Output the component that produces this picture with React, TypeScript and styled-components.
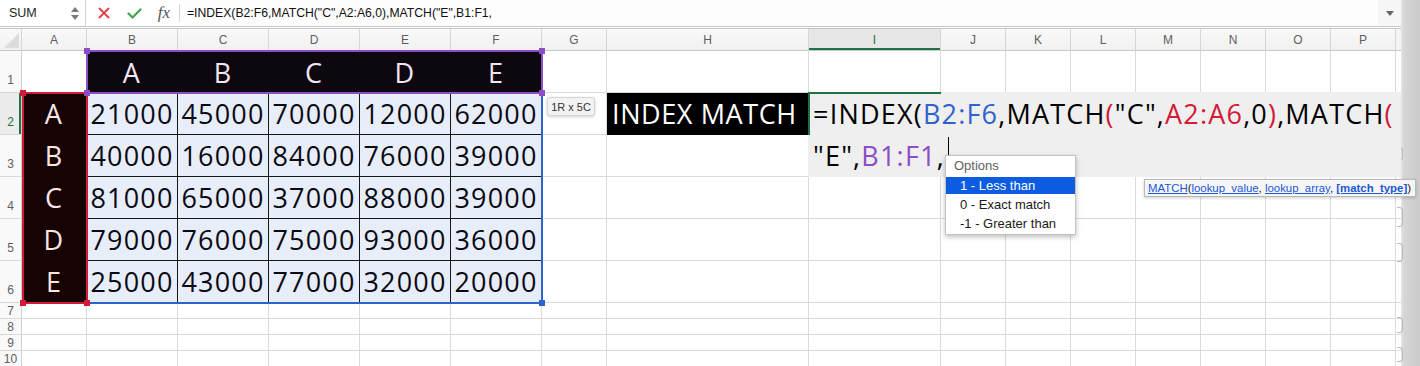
import React from 'react';
import styled, { createGlobalStyle, css } from 'styled-components';

const GlobalStyle = createGlobalStyle`
  *, *::before, *::after { box-sizing: border-box; }
  html, body { margin: 0; padding: 0; background: #ffffff; }
  body { font-family: "Liberation Sans", Arial, sans-serif; overflow: hidden; }
`;

const BIG_FONT = `"Open Sans", "Noto Sans", sans-serif`;

const Window = styled.div`
  position: relative;
  width: 1420px;
  height: 366px;
  overflow: hidden;
  display: grid;
  grid-template-columns: 1401px 19px;
`;

const Main = styled.div`
  display: flex;
  flex-direction: column;
  min-width: 0;
`;

const SideStrip = styled.div`
  position: relative;
  background: linear-gradient(to right, #e6e6e6 0px, #d6d6d6 3px, #cbcbcb 100%);
`;

const StripNotch = styled.span<{ $y: number; $h: number }>`
  position: absolute;
  left: -4px;
  top: ${(p) => p.$y}px;
  width: 6px;
  height: ${(p) => p.$h}px;
  border: 1px solid #b9b9b9;
  border-left: none;
  border-radius: 0 4px 4px 0;
`;

/* ---------- formula bar ---------- */
const FormulaBar = styled.div`
  height: 27px;
  flex: none;
  display: flex;
  align-items: stretch;
  border-bottom: 1px solid #c6c6c6;
  background: #ffffff;
`;

const NameBox = styled.div`
  width: 86px;
  border-right: 1px solid #d3d3d3;
  display: flex;
  align-items: center;
  justify-content: space-between;
  padding: 0 6px 0 9px;
  font-size: 12.5px;
  color: #1e1e1e;
`;

const Spinner = styled.svg`
  width: 8px;
  height: 18px;
`;

const ActionGroup = styled.div`
  display: flex;
  margin-left: 3px;
`;

const ActionSlot = styled.div`
  width: 30px;
  display: flex;
  align-items: center;
  justify-content: center;
`;

const FxLabel = styled.span`
  font-family: "Liberation Serif", "Times New Roman", serif;
  font-style: italic;
  font-size: 17px;
  color: #555555;
  margin-top: -1px;
`;

const BarSeparator = styled.div`
  width: 1px;
  background: #d6d6d6;
  margin: 4px 0;
`;

const FormulaText = styled.div`
  flex: 1;
  display: flex;
  align-items: center;
  padding-left: 7px;
  font-size: 12.2px;
  color: #111111;
  white-space: nowrap;
  background: #fdfdfd;
`;

const ExpandSlot = styled.div`
  width: 23px;
  display: flex;
  align-items: center;
  justify-content: center;
  background: #f6f6f6;
`;

const BarRule = styled.div`
  height: 2px;
  flex: none;
  border-bottom: 1px solid #c6c6c6;
`;

/* ---------- sheet grid ---------- */
const Sheet = styled.div`
  display: grid;
  grid-template-columns: 22px 65px 91px 91px 91px 91px 91px 65px 202px 132px repeat(7, 65px) 5px;
  grid-template-rows: 22px repeat(6, 42px) repeat(4, 16px);
`;

const headerBase = css`
  background: linear-gradient(#f9f9f9, #f1f1f1);
  border-right: 1px solid #d6d6d6;
  border-bottom: 1px solid #c8c8c8;
  font-family: "Liberation Sans", Arial, sans-serif;
  font-size: 12px;
  color: #5e5e5e;
`;

const Corner = styled.div`
  ${headerBase};
  display: flex;
  align-items: flex-end;
  justify-content: flex-end;
`;

const CornerMark = styled.svg`
  width: 21px;
  height: 21px;
`;

const ColHeader = styled.div<{ $active?: boolean; $edge?: boolean }>`
  ${headerBase};
  display: flex;
  align-items: center;
  justify-content: center;
  ${(p) =>
    p.$active &&
    css`
      background: #e7e7e7;
      color: #1f7145;
      box-shadow: inset 0 -2px 0 #1f7145;
    `}
  ${(p) =>
    p.$edge &&
    css`
      border-right: none;
      background: #f4f4f4;
    `}
`;

const RowHeader = styled.div<{ $active?: boolean; $compact?: boolean }>`
  background: #f9f9f9;
  border-right: 1px solid #d0d0d0;
  border-bottom: 1px solid #d9d9d9;
  display: flex;
  align-items: ${(p) => (p.$compact ? 'center' : 'flex-end')};
  justify-content: center;
  font-size: 12px;
  line-height: 14px;
  color: #5e5e5e;
  padding-bottom: ${(p) => (p.$compact ? 0 : 5)}px;
  ${(p) =>
    p.$active &&
    css`
      background: #ececec;
      color: #1f7145;
      box-shadow: inset -2px 0 0 #1f7145;
    `}
`;

type Kind = 'plain' | 'title' | 'label' | 'data' | 'banner' | 'edge';

const kindStyles: Record<Kind, ReturnType<typeof css>> = {
  plain: css``,
  edge: css`
    border-right: none;
  `,
  title: css`
    background: #0d0710;
    color: #f4e6f0;
    border-color: #0d0710;
    padding-top: 2px;
  `,
  label: css`
    background: #160404;
    color: #fde4e5;
    border-color: #160404;
  `,
  data: css`
    background: #e7edf9;
    color: #0a0a12;
    border-color: #161616;
  `,
  banner: css`
    background: #000000;
    color: #ffffff;
    border-color: #000000;
    justify-content: flex-start;
    padding-left: 5px;
    letter-spacing: 0.6px;
  `,
};

const Cell = styled.div<{ $kind: Kind }>`
  border-right: 1px solid #dadada;
  border-bottom: 1px solid #dadada;
  display: flex;
  align-items: center;
  justify-content: center;
  font-family: ${BIG_FONT};
  font-size: 27px;
  font-weight: 500;
  line-height: 1;
  letter-spacing: 1.2px;
  white-space: nowrap;
  overflow: hidden;
  ${(p) => kindStyles[p.$kind]}
`;

/* ---------- overlays ---------- */
const Frame = styled.div<{ $c: string; $x: number; $y: number; $w: number; $h: number }>`
  position: absolute;
  left: ${(p) => p.$x}px;
  top: ${(p) => p.$y}px;
  width: ${(p) => p.$w}px;
  height: ${(p) => p.$h}px;
  border: 2px solid ${(p) => p.$c};
  pointer-events: none;
`;

type Corner4 = 'tl' | 'tr' | 'bl' | 'br';

const Handle = styled.span<{ $c: string; $at: Corner4 }>`
  position: absolute;
  width: 6px;
  height: 6px;
  background: ${(p) => p.$c};
  ${(p) => (p.$at[0] === 't' ? 'top: -4px;' : 'bottom: -4px;')}
  ${(p) => (p.$at[1] === 'l' ? 'left: -4px;' : 'right: -4px;')}
`;

const CellEditor = styled.div`
  position: absolute;
  left: 808px;
  top: 92px;
  width: 593px;
  height: 85px;
  background: #efefef;
  padding: 1px 0 0 5px;
  font-family: ${BIG_FONT};
  font-size: 27px;
  font-weight: 500;
  letter-spacing: 1.2px;
  line-height: 42px;
  color: #000000;
  white-space: nowrap;
  overflow: hidden;
  &::before {
    content: '';
    position: absolute;
    left: 0;
    top: 0;
    width: 133px;
    height: 2px;
    background: #1e7145;
  }
  &::after {
    content: '';
    position: absolute;
    left: 0;
    top: 0;
    width: 2px;
    height: 43px;
    background: #1e7145;
  }
`;

const EditorLine = styled.div`
  height: 42px;
`;

const Token = styled.span<{ $c?: string }>`
  color: ${(p) => p.$c || '#000000'};
`;

const Caret = styled.span`
  display: inline-block;
  width: 1px;
  height: 20px;
  background: #000000;
  margin-left: 3px;
  vertical-align: 9px;
`;

const SizeBadge = styled.div`
  position: absolute;
  left: 547px;
  top: 97px;
  width: 48px;
  height: 19px;
  background: #f3f3f3;
  border: 1px solid #d4d4d4;
  border-radius: 3px;
  box-shadow: 0 1px 3px rgba(0, 0, 0, 0.18);
  font-size: 11px;
  color: #333333;
  display: flex;
  align-items: center;
  justify-content: center;
`;

const OptionsMenu = styled.div`
  position: absolute;
  left: 945px;
  top: 155px;
  width: 131px;
  background: #ffffff;
  border: 1px solid #c3c3c3;
  box-shadow: 0 2px 5px rgba(0, 0, 0, 0.25);
  font-family: "Liberation Sans", Arial, sans-serif;
  font-size: 13px;
  color: #1a1a1a;
  padding-bottom: 1px;
`;

const MenuHeading = styled.div`
  height: 20px;
  line-height: 20px;
  padding-left: 8px;
  color: #5e5e5e;
`;

const MenuItem = styled.div<{ $selected?: boolean }>`
  height: 19px;
  line-height: 19px;
  padding-left: 14px;
  white-space: nowrap;
  ${(p) =>
    p.$selected &&
    css`
      color: #ffffff;
      background: linear-gradient(#0b5ce0, #0b5ce0) center / 100% 17px no-repeat;
    `}
`;

const ArgTip = styled.div`
  position: absolute;
  left: 1144px;
  top: 179px;
  height: 18px;
  padding: 0 4px 0 3px;
  background: #f6f6f6;
  border: 1px solid #b9b9b9;
  box-shadow: 0 1px 3px rgba(0, 0, 0, 0.2);
  font-size: 11.4px;
  line-height: 16px;
  color: #222222;
  white-space: nowrap;
`;

const ArgLink = styled.span<{ $strong?: boolean }>`
  color: #1a56d6;
  text-decoration: underline;
  font-weight: ${(p) => (p.$strong ? 700 : 400)};
`;

/* ---------- data ---------- */
const COL_LABELS = 'ABCDEFGHIJKLMNOP'.split('');
const LETTERS = ['A', 'B', 'C', 'D', 'E'];
const DATA = [
  ['21000', '45000', '70000', '12000', '62000'],
  ['40000', '16000', '84000', '76000', '39000'],
  ['81000', '65000', '37000', '88000', '39000'],
  ['79000', '76000', '75000', '93000', '36000'],
  ['25000', '43000', '77000', '32000', '20000'],
];

function cellAt(r: number, c: number): { kind: Kind; text?: string } {
  if (r === 1 && c >= 1 && c <= 5) return { kind: 'title', text: LETTERS[c - 1] };
  if (r >= 2 && r <= 6 && c === 0) return { kind: 'label', text: LETTERS[r - 2] };
  if (r >= 2 && r <= 6 && c >= 1 && c <= 5) return { kind: 'data', text: DATA[r - 2][c - 1] };
  if (r === 2 && c === 7) return { kind: 'banner', text: 'INDEX MATCH' };
  return { kind: 'plain' };
}

const BLUE = '#2f63cc';
const RED = '#d21c37';
const PURPLE = '#8c4ec6';

const NOTCHES = [
  { y: 147, h: 14 },
  { y: 207, h: 20 },
  { y: 243, h: 19 },
  { y: 317, h: 16 },
  { y: 347, h: 15 },
];

function Handles({ c, at }: { c: string; at: Corner4[] }) {
  return (
    <>
      {at.map((a) => (
        <Handle key={a} $c={c} $at={a} />
      ))}
    </>
  );
}

export default function App() {
  const cells: React.ReactNode[] = [];
  cells.push(
    <Corner key="corner">
      <CornerMark viewBox="0 0 21 21">
        <polygon points="19,4 19,19 4,19" fill="#dcdcdc" />
      </CornerMark>
    </Corner>
  );
  COL_LABELS.forEach((l) =>
    cells.push(
      <ColHeader key={'h' + l} $active={l === 'I'}>
        {l}
      </ColHeader>
    )
  );
  cells.push(<ColHeader key="h-end" $edge />);
  for (let r = 1; r <= 10; r++) {
    cells.push(
      <RowHeader key={'r' + r} $active={r === 2} $compact={r > 6}>
        {r}
      </RowHeader>
    );
    for (let c = 0; c < 16; c++) {
      const { kind, text } = cellAt(r, c);
      cells.push(
        <Cell key={`${r}-${c}`} $kind={kind}>
          {text}
        </Cell>
      );
    }
    cells.push(<Cell key={`${r}-end`} $kind="edge" />);
  }

  return (
    <>
      <GlobalStyle />
      <Window>
        <Main>
          <FormulaBar>
            <NameBox>
              <span>SUM</span>
              <Spinner viewBox="0 0 8 18">
                <polygon points="0,8 4,3 8,8" fill="#7a7a7a" />
                <polygon points="0,11 8,11 4,16" fill="#7a7a7a" />
              </Spinner>
            </NameBox>
            <ActionGroup>
              <ActionSlot>
                <svg width="12" height="12" viewBox="0 0 12 12">
                  <path d="M1.5 1.5 L10.5 10.5 M10.5 1.5 L1.5 10.5" stroke="#e4434a" strokeWidth="2" strokeLinecap="round" />
                </svg>
              </ActionSlot>
              <ActionSlot>
                <svg width="15" height="11" viewBox="0 0 15 11">
                  <path d="M1.5 5.5 L5.5 9.5 L13.5 1.5" stroke="#3da64b" strokeWidth="2.2" fill="none" strokeLinecap="round" strokeLinejoin="round" />
                </svg>
              </ActionSlot>
              <ActionSlot>
                <FxLabel>fx</FxLabel>
              </ActionSlot>
            </ActionGroup>
            <BarSeparator />
            <FormulaText>=INDEX(B2:F6,MATCH("C",A2:A6,0),MATCH("E",B1:F1,</FormulaText>
            <ExpandSlot>
              <svg width="8" height="5" viewBox="0 0 8 5">
                <polygon points="0,0 8,0 4,5" fill="#666666" />
              </svg>
            </ExpandSlot>
          </FormulaBar>
          <BarRule />
          <Sheet>{cells}</Sheet>
        </Main>
        <SideStrip>
          {NOTCHES.map((n) => (
            <StripNotch key={n.y} $y={n.y} $h={n.h} />
          ))}
        </SideStrip>

        <Frame $c={BLUE} $x={86} $y={92} $w={457} $h={212}>
          <Handles c={BLUE} at={['br']} />
        </Frame>
        <Frame $c={RED} $x={22} $y={92} $w={66} $h={212}>
          <Handles c={RED} at={['tl', 'bl', 'br']} />
        </Frame>
        <Frame $c={PURPLE} $x={86} $y={50} $w={457} $h={44}>
          <Handles c={PURPLE} at={['tl', 'tr', 'bl', 'br']} />
        </Frame>

        <SizeBadge>1R x 5C</SizeBadge>

        <CellEditor>
          <EditorLine>
            <Token>=INDEX(</Token>
            <Token $c={BLUE}>B2:F6</Token>
            <Token>,MATCH</Token>
            <Token $c={RED}>(</Token>
            <Token>"C",</Token>
            <Token $c={RED}>A2:A6</Token>
            <Token>,0</Token>
            <Token $c={RED}>)</Token>
            <Token>,MATCH</Token>
            <Token $c={RED}>(</Token>
          </EditorLine>
          <EditorLine>
            <Token>"E",</Token>
            <Token $c={PURPLE}>B1:F1</Token>
            <Token>,</Token>
            <Caret />
          </EditorLine>
        </CellEditor>

        <OptionsMenu>
          <MenuHeading>Options</MenuHeading>
          <MenuItem $selected>1 - Less than</MenuItem>
          <MenuItem>0 - Exact match</MenuItem>
          <MenuItem>-1 - Greater than</MenuItem>
        </OptionsMenu>

        <ArgTip>
          <ArgLink>MATCH</ArgLink>(<ArgLink>lookup_value</ArgLink>, <ArgLink>lookup_array</ArgLink>,{' '}
          <ArgLink $strong>[match_type]</ArgLink>)
        </ArgTip>
      </Window>
    </>
  );
}
